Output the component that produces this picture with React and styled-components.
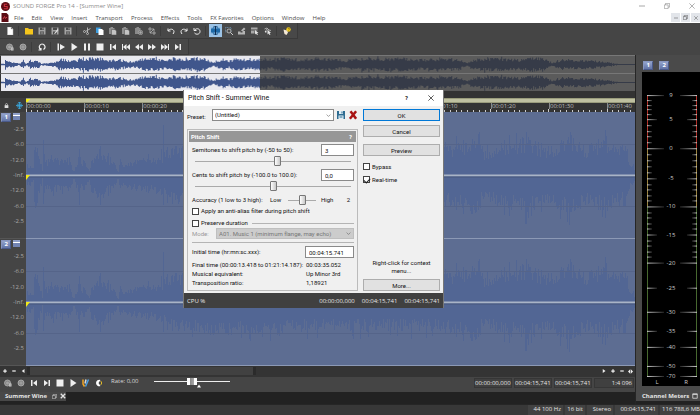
import { useState } from "react";
import styled, { createGlobalStyle } from "styled-components";

const GlobalStyle = createGlobalStyle`
  * { box-sizing: border-box; }
  body {
    margin: 0;
    background: #454545;
    font-family: "Open Sans", "Noto Sans", sans-serif;
    font-size: 6px;
    line-height: 8px;
    color: #e4e4e4;
  }
  button, input, select {
    font: inherit;
    color: inherit;
    margin: 0;
    padding: 0;
  }
`;

/* ---------- waveform data ---------- */

const random = (seed) => {
  let s = seed;
  return () => {
    s = (s * 16807) % 2147483647;
    return s / 2147483647;
  };
};

const level = (points, x) => {
  for (let i = 1; i < points.length; i++) {
    const [x0, y0] = points[i - 1];
    const [x1, y1] = points[i];
    if (x <= x1) return y0 + ((y1 - y0) * (x - x0)) / (x1 - x0 || 1);
  }
  return points[points.length - 1][1];
};

const wavePath = (points, width, mid, seed, rough) => {
  const next = random(seed);
  let d = "";
  for (let x = 0; x < width; x++) {
    const base = level(points, x);
    const peak = next() > 0.86 ? 1.25 : 1;
    const up = Math.max(0.4, base * (1 - rough + rough * next()) * peak);
    const down = Math.max(0.4, base * (1 - rough + rough * next()) * peak);
    d += `M${x} ${(mid - up).toFixed(1)}h1V${(mid + down).toFixed(1)}h-1z`;
  }
  return d;
};

const overviewLevels = [
  [0, 1], [3, 1], [4, 7], [6, 4], [10, 3], [18, 1], [22, 4], [25, 1], [28, 4], [37, 4], [40, 1], [48, 2],
  [55, 3], [58, 7], [66, 5], [76, 5], [84, 8], [100, 7], [108, 5], [116, 7], [124, 4], [132, 3], [142, 7],
  [156, 7], [164, 5], [172, 8], [184, 6], [194, 8], [206, 6], [212, 2], [216, 4], [222, 7], [228, 4],
  [234, 8], [246, 6], [258, 7], [272, 5], [280, 8], [300, 6], [316, 8], [340, 6], [344, 3], [350, 7],
  [380, 7], [400, 8], [420, 6], [445, 7], [458, 6], [466, 2], [475, 6], [490, 8], [505, 7], [520, 6],
  [532, 8], [544, 7], [551, 2], [560, 5], [575, 5], [590, 5], [600, 4], [606, 3], [614, 1], [635, 0],
];

const trackLevels = [
  [0, 3], [1, 12], [6, 8], [7, 8], [8, 34], [11, 40], [12, 18], [15, 12], [16, 4], [17, 30], [19, 16],
  [28, 18], [34, 16], [44, 18], [47, 5], [51, 12], [53, 32], [55, 16], [60, 14], [63, 5], [65, 18],
  [74, 28], [80, 20], [88, 14], [92, 4], [94, 18], [96, 12], [110, 17], [130, 19], [136, 22], [137, 50],
  [138, 24], [146, 30], [200, 34], [300, 30], [400, 30], [418, 30], [440, 34], [452, 44], [456, 26],
  [480, 34], [500, 40], [520, 28], [545, 42], [560, 30], [580, 40], [592, 28], [600, 34], [604, 12], [609, 8],
];

const overviewWaves = [wavePath(overviewLevels, 635, 9, 11, 0.5), wavePath(overviewLevels, 635, 9, 11, 0.5)];
const trackWaves = [wavePath(trackLevels, 609, 63, 71, 0.45), wavePath(trackLevels, 609, 63, 71, 0.45)];

const VIEW_SECONDS = 104.8;
const SELECTED = "40.8%";
const seconds = Array.from({ length: 105 }, (_, i) => i);
const marks = seconds.filter((s) => s % 10 === 0);
const markLabel = (s) => `00:0${Math.floor(s / 60)}:${String(s % 60).padStart(2, "0")}`;

const dbLabels = ["-2.5", "-6.0", "-12.0", "-Inf.", "-12.0", "-6.0", "-2.5"];

const meterMarks = [
  ["9", 23], ["5", 47], ["0", 76], ["-5", 106], ["-10", 134], ["-15", 162], ["-20", 190],
  ["-25", 215], ["-30", 239], ["-35", 258], ["-40", 274], ["-50", 293], ["-70", 303],
];

/* ---------- icons, 16 unit grid ---------- */

const stroke = { fill: "none", stroke: "currentColor", strokeWidth: 2 };

const shapes = {
  newFile: <path d="M3 0h7l4 4v12H3z M10 0v4h4" fill="#fff" stroke="#bbb" />,
  folder: <path d="M0 2h6l2 2h8v11H0z" fill="#f4c51c" />,
  save: (
    <g fill="#a4a4a4">
      <path d="M1 1h14v14H1z" />
      <path d="M4 1h8v5H4zM4 9h8v6H4z" fill="#4b4b4b" />
      <path d="M5 11h6v1H5zM5 13h6v1H5zM9 2h2v3H9z" />
    </g>
  ),
  saveAs: (
    <g fill="#a4a4a4">
      <path d="M1 1h14v14H1z" />
      <path d="M4 1h8v5H4zM4 9h8v6H4z" fill="#4b4b4b" />
      <path d="M7 12l6-8 2 2-6 7-3 1z" fill="#ddd" />
    </g>
  ),
  cut: (
    <g {...stroke} stroke="#b4b4b4">
      <path d="M15 3L5 9M9 1l0 11" />
      <circle cx="3" cy="9" r="2" />
      <circle cx="9" cy="13" r="2" />
    </g>
  ),
  copy: (
    <g>
      <path d="M0 1h9v11H0z" fill="#3d9ee0" />
      <path d="M5 4h7l3 3v9H5z" fill="#fff" />
    </g>
  ),
  paste: (
    <g>
      <path d="M0 2h3V0h5v2h3v12H0z" fill="#909090" />
      <path d="M5 5h7l3 3v8H5z" fill="#c4c4c4" stroke="#4b4b4b" />
    </g>
  ),
  pasteMix: (
    <g>
      <path d="M0 2h3V0h5v2h3v12H0z" fill="#8a8a8a" />
      <circle cx="11" cy="11" r="4.500" fill="#777" stroke="#bbb" />
      <path d="M8 11h6M11 8v6" stroke="#bbb" />
    </g>
  ),
  crop: <path d="M4 0v12h12M0 4h12v12M4 12L12 4" {...stroke} stroke="#b4b4b4" strokeWidth="1.600" />,
  undo: <path d="M2 3v5h5M2 8c3-5 11-5 12 1 0 2-1 4-2 5" {...stroke} />,
  redo: <path d="M14 3v5H9M14 8C11 3 3 3 2 9c0 2 1 4 2 5" {...stroke} />,
  repeat: <path d="M2 2v5h5M3 7c2-5 11-5 11 2 0 6-8 7-11 3" {...stroke} />,
  edit: (
    <g>
      <path d="M0 5h16v6H0z" fill="#1f6aa8" />
      <path d="M2 3v10M5 1v14M11 1v14M14 3v10" stroke="#1f6aa8" strokeWidth="2" />
      <path d="M8 0v16M5 0h6M5 16h6" stroke="#0c2f55" strokeWidth="2" />
    </g>
  ),
  magnify: (
    <g>
      <path d="M1 1h11v9H1z" fill="none" stroke="#7fb2dd" strokeDasharray="2 1" />
      <circle cx="8" cy="8" r="4" fill="#4b4b4b" stroke="#ccc" strokeWidth="1.500" />
      <path d="M11 11l5 5" stroke="#ccc" strokeWidth="2" />
    </g>
  ),
  pencil: <path d="M0 15h14V8H9v3H5v-2H0z M6 7l6-6 3 3-6 5z" fill="#b4b4b4" />,
  event: (
    <g fill="#a8a8a8">
      <path d="M0 1h13v3H0zM0 5h13v2H0zM0 8h7v5H0z" />
      <path d="M8 6v9l2-2 2 3 2-1-2-3h3z" fill="#e4e4e4" />
    </g>
  ),
  envelope: (
    <g>
      <path d="M1 4l5-2 4 4 4 1M2 10l4-6" {...stroke} stroke="#aaa" />
      <path d="M7 5v10l2-2 2 3 2-1-2-3h3zM2 8h3v3H2z" fill="#e4e4e4" />
    </g>
  ),
  help: (
    <g>
      <circle cx="11" cy="5" r="4.500" fill="#f2cc1e" />
      <path d="M10 4c0-2 3-2 3 0 0 1-2 1-2 3" fill="none" stroke="#5a4700" />
      <path d="M1 5l7 2 2 4-3 5-4-2-1-4z" fill="#f5e9d6" />
    </g>
  ),
  armed: (
    <g>
      <circle cx="7" cy="8" r="6" fill="#858585" stroke="#b6b6b6" strokeWidth="1.500" />
      <circle cx="7" cy="8" r="3" fill="#a4a4a4" />
      <path d="M10 9h5v6h-5z" fill="#cfcfcf" />
      <path d="M11 12h3" stroke="#555" />
    </g>
  ),
  record: (
    <g>
      <circle cx="8" cy="8" r="6" fill="#888" stroke="#b6b6b6" strokeWidth="1.500" />
      <circle cx="8" cy="8" r="3" fill="#9c9c9c" />
    </g>
  ),
  loop: <path d="M1 14h5v-4M6 13C0 10 3 2 8 2s9 7 3 11" {...stroke} strokeWidth="2.400" />,
  playAll: <path d="M1 1h3v14H1zM6 2l10 6-10 6z" fill="currentColor" />,
  play: <path d="M3 0l12 8-12 8z" fill="currentColor" />,
  pause: <path d="M2 1h4v14H2zM10 1h4v14h-4z" fill="currentColor" />,
  stop: <path d="M1 1h14v14H1z" fill="currentColor" />,
  toStart: <path d="M2 2h3v12H2zM14 2v12L6 8z" fill="currentColor" />,
  toEnd: <path d="M11 2h3v12h-3zM2 2v12l8-6z" fill="currentColor" />,
  prev: <path d="M0 2h2v12H0zM9 2v12L2 8zM16 2v12L9 8z" fill="currentColor" />,
  rewind: <path d="M8 2v12L0 8zM16 2v12L8 8z" fill="currentColor" />,
  forward: <path d="M0 2v12l8-6zM8 2v12l8-6z" fill="currentColor" />,
  next: <path d="M14 2h2v12h-2zM0 2v12l7-6zM7 2v12l7-6z" fill="currentColor" />,
  plugIn: (
    <g strokeWidth="3">
      <path d="M2 1v9l3 5" stroke="#f0a526" fill="none" />
      <path d="M13 1L7 15" stroke="#4aa0e6" />
      <path d="M8 1L6 9" stroke="#d8d8d8" />
    </g>
  ),
  scrub: (
    <g>
      <path d="M11 2a6.500 6.500 0 100 12l-4-6z" fill="#fff" />
      <path d="M11 4c3 2 3 6 0 8" stroke="#e0b92a" strokeWidth="2" fill="none" />
    </g>
  ),
  lock: (
    <g>
      <path d="M2 7h12v9H2z" fill="#ddd" />
      <path d="M5 8V4c0-3 6-3 6 0v4" fill="none" stroke="#ddd" strokeWidth="2" />
    </g>
  ),
  snap: (
    <g stroke="#39a3d8" strokeWidth="2" fill="none">
      <path d="M8 0v16M0 8h16M2 5h12M5 1h6M5 15h6M2 11h12" />
    </g>
  ),
  minimize: <path d="M0 8h16" stroke="currentColor" strokeWidth="2" />,
  restore: <path d="M1 5h10v10H1zM4 5V1h11v10h-4" fill="none" stroke="currentColor" strokeWidth="1.600" />,
  close: <path d="M1 1l14 14M15 1L1 15" stroke="currentColor" strokeWidth="1.800" />,
  closeBold: <path d="M2 2l12 12M14 2L2 14" stroke="currentColor" strokeWidth="3.500" />,
  maximize: <path d="M2 2h12v12H2zM2 4h12" fill="none" stroke="currentColor" strokeWidth="2" />,
  chevron: <path d="M2 5l6 6 6-6" fill="none" stroke="#666" strokeWidth="2" />,
  plus: <path d="M8 1v14M1 8h14" stroke="currentColor" strokeWidth="5" />,
  minus: <path d="M1 8h14" stroke="currentColor" strokeWidth="5" />,
  left: <path d="M14 0v16L3 8z" fill="currentColor" />,
  right: <path d="M3 0v16l11-8z" fill="currentColor" />,
  both: <path d="M7 1v14L0 8zM9 1v14l7-7z" fill="currentColor" />,
  up: <path d="M8 2l8 12H0z" fill="currentColor" />,
  disk: (
    <g>
      <path d="M0 0h16v16H0z" fill="#2e6c92" />
      <path d="M4 0h8v6H4zM3 9h10v7H3z" fill="#dfeef6" />
      <path d="M9 1h2v4H9zM5 11h6v1H5zM5 13h6v1H5z" fill="#2e6c92" />
    </g>
  ),
  remove: <path d="M4 2l9 12M13 2L3 14" stroke="#a81414" strokeWidth="4" />,
};

const Icon = ({ name, size = 9 }) => (
  <svg width={size} height={size} viewBox="0 0 16 16" aria-hidden="true">
    {shapes[name]}
  </svg>
);

/* ---------- window frame ---------- */

const Page = styled.div`
  position: relative;
  min-height: 100vh;
  display: flex;
  flex-direction: column;
  overflow: hidden;
`;

const TitleBar = styled.header`
  display: flex;
  align-items: center;
  gap: 3px;
  height: 12px;
  padding: 0 5px 0 1px;
  background: #fff;
  color: #8c8c8c;
`;

const Title = styled.h1`
  flex: 1;
  margin: 0;
  font-size: 6px;
  font-weight: 400;
`;

const WindowButtons = styled.div`
  display: flex;
  gap: 19px;
`;

const PlainButton = styled.button`
  display: flex;
  align-items: center;
  justify-content: center;
  border: 0;
  background: none;
`;

const MenuBar = styled.nav`
  display: flex;
  align-items: center;
  gap: 8px;
  height: 11px;
  padding-left: 1px;
  background: #fff;
  color: #4c4c4c;
`;

const MenuIcon = styled.svg`
  margin-right: -3px;
`;

const ChildButtons = styled.div`
  display: flex;
  gap: 1px;
  margin-left: auto;
`;

const ChildButton = styled(PlainButton)`
  width: 9px;
  height: 9px;
  background: #e2e5ea;
`;

const Toolbar = styled.div`
  display: flex;
  align-items: center;
  align-self: flex-start;
  height: 16px;
  padding: 0 4px 0 3px;
  border: 1px solid #3a3a3a;
  border-width: 0 1px 1px 0;
  background: #484848;
`;

const ToolButton = styled(PlainButton)`
  width: 13px;
  height: 13px;
  color: #efefef;
  background: ${(p) => (p.$active ? "#9cc3e6" : "none")};
`;

const Separator = styled.span`
  width: 1px;
  height: 10px;
  margin: 0 3px 0 2px;
  background: #3c3c3c;
`;

const Workspace = styled.div`
  flex: 1;
  display: flex;
  min-height: 0;
`;

const Editor = styled.main`
  flex: 1;
  min-width: 0;
  display: flex;
  flex-direction: column;
  border-right: 1px solid #262626;
`;

const Lane = styled.div`
  height: 18px;
  border-top: 1px solid #777;
  border-left: 1px solid #333;
  background: linear-gradient(to right, #e9e9ef ${SELECTED}, #5b5b5b ${SELECTED});
`;

const Wave = styled.svg`
  display: block;
  width: 100%;
  height: 100%;
`;

const TimeArea = styled.div`
  display: flex;
  height: 21px;
  padding-top: 7px;
  background: #333;
`;

const TimeTools = styled.div`
  display: flex;
  align-items: center;
  justify-content: space-around;
  width: 26px;
  background: #3c3c3c;
`;

const Timeline = styled.div`
  flex: 1;
  min-width: 0;
  overflow: hidden;
`;

const LoopBar = styled.div`
  height: 5px;
  border: 1px solid #9a9c7c;
  border-width: 1px 0;
  background: linear-gradient(135deg, #f5ec1c 3px, #bfc0a0 3px);
`;

const Marks = styled.div`
  display: flex;
  height: 6px;
`;

const Mark = styled.span`
  flex: none;
  border-left: 1px solid #888;
  color: #bbb;
  line-height: 7px;
`;

const Ticks = styled.svg`
  display: block;
  width: 100%;
  height: 3px;
`;

const Tracks = styled.div`
  flex: 1;
  display: flex;
  flex-direction: column;
`;

const Track = styled.section`
  flex: 1;
  display: flex;
  min-height: 126px;
`;

const TrackHead = styled.div`
  display: flex;
  align-items: flex-start;
  width: 26px;
  border-bottom: 1px solid #555;
`;

const Badge = styled.span`
  width: 10px;
  height: 9px;
  padding-right: 2px;
  border: 1px solid #8796bf;
  border-right-color: #4a5a8a;
  border-bottom-color: #4a5a8a;
  background: linear-gradient(#93a3cb, #6274a6);
  color: #fff;
  font-weight: 700;
  line-height: 7px;
  text-align: right;
`;

const ChannelBox = styled.div`
  display: flex;
  gap: 2px;
  width: 20px;
  margin: 1px -20px 0 1px;
`;

const Collapse = styled.button`
  width: 7px;
  height: 7px;
  border: 0;
  border-top: 2px solid #8f9fc8;
  background: linear-gradient(#fff 1px, #7385b4 1px);
`;

const DbScale = styled.ol`
  flex: 1;
  align-self: stretch;
  display: flex;
  flex-direction: column;
  margin: 0;
  padding: 9px 2px 9px 0;
  list-style: none;
  color: #a8a8a8;
  text-align: right;
`;

const DbLabel = styled.li`
  flex: 1;
  display: flex;
  align-items: center;
  justify-content: flex-end;
`;

const WaveBox = styled.div`
  flex: 1;
  min-width: 0;
  border-bottom: 1px solid #8c99b5;
  background: #5d6d92;
`;

const ScrollRow = styled.div`
  display: flex;
  align-items: center;
  height: 11px;
  padding-bottom: 1px;
  background: #343434;
`;

const ScrollTrack = styled.div`
  flex: 1;
`;

const ScrollThumb = styled.div`
  width: 40%;
  height: 8px;
  border: 3px solid #2b2b2b;
  border-width: 0 3px;
  background: #414141;
`;

const ScrollButton = styled(PlainButton)`
  width: 9px;
  height: 9px;
  color: #eee;
`;

const Transport = styled.div`
  display: flex;
  align-items: center;
  height: 15px;
  padding: 0 1px 3px;
`;

const Rate = styled.div`
  flex: 1;
  align-self: flex-start;
  display: flex;
  align-items: center;
  gap: 15px;
  padding-left: 6px;
  color: #d8d8d8;
`;

const RateControl = styled.div`
  position: relative;
  display: flex;
`;

const RateSlider = styled.input`
  width: 76px;
  height: 8px;
  appearance: none;
  background: linear-gradient(#eee, #eee) center / 100% 1px no-repeat;

  &::-webkit-slider-thumb {
    appearance: none;
    width: 10px;
    height: 7px;
    background: linear-gradient(90deg, #fff 3px, #888 3px, #aaa 7px, #fff 7px);
  }
`;

const RateMarker = styled.span`
  position: absolute;
  top: 7px;
  left: 43px;
  display: flex;
  color: #fff;
`;

const Readout = styled.output`
  width: ${(p) => p.$width}px;
  height: 10px;
  margin-left: 2px;
  padding-right: 1px;
  border: 1px solid #363636;
  background: #404040;
  line-height: 8px;
  text-align: right;
  white-space: nowrap;
`;

const TabRow = styled.div`
  height: 12px;
  background: #222;
`;

const Tab = styled.div`
  display: flex;
  align-items: center;
  gap: 3px;
  width: 66px;
  height: 9px;
  padding: 0 0 1px 5px;
  background: #484848;
  font-weight: 700;
`;

const TabTitle = styled.span`
  flex: 1;
  white-space: nowrap;
`;

/* ---------- meters ---------- */

const Meters = styled.aside`
  display: flex;
  flex-direction: column;
  width: 64px;
  padding: 6px 0 0 6px;
  border-bottom: 3px solid #222;
  background: #4a4a4a;
`;

const MeterBadges = styled.div`
  display: flex;
  gap: 6px;
  height: 11px;
  padding-left: 1px;
`;

const MeterChart = styled.svg`
  flex: 1;
  width: 100%;
  background: #000;
`;

const MeterTitle = styled.div`
  display: flex;
  align-items: center;
  gap: 3px;
  height: 15px;
  padding-top: 4px;
  font-weight: 700;
  white-space: nowrap;
`;

const StatusBar = styled.footer`
  display: flex;
  justify-content: flex-end;
  gap: 2px;
  height: 12px;
  background: #383838;
  border-top: 1px solid #262626;
`;

const StatusCell = styled.span`
  width: ${(p) => p.$width}px;
  padding-right: ${(p) => (p.$last ? 0 : 2)}px;
  background: #424242;
  line-height: 9px;
  text-align: right;
  white-space: nowrap;
`;

/* ---------- dialog ---------- */

const Dialog = styled.section`
  position: absolute;
  left: 183px;
  top: 90px;
  width: 261px;
  border: 1px solid #777;
  border-width: 0 1px;
  background: #f0f0f0;
  color: #111;
  font-family: Roboto, "Open Sans", sans-serif;
`;

const DialogTitle = styled.header`
  display: flex;
  align-items: center;
  gap: 20px;
  height: 16px;
  padding: 0 9px 0 4px;
  background: #fff;
`;

const DialogName = styled.h2`
  flex: 1;
  margin: 0;
  font-size: 7px;
  font-weight: 400;
`;

const DialogBody = styled.div`
  display: flex;
  gap: 5px;
  padding: 3px 3px 2px;
`;

const Settings = styled.div`
  width: 171px;
`;

const Actions = styled.div`
  flex: 1;
  display: flex;
  flex-direction: column;
`;

const ActionButton = styled.button`
  height: 12px;
  margin-bottom: ${(p) => p.$after || 0}px;
  border: 1px solid ${(p) => (p.$primary ? "#0078d7" : "#adadad")};
  background: #e1e1e1;
  line-height: 9px;
`;

const Hint = styled.p`
  margin: auto 0 4px;
  padding: 0 6px;
  text-align: center;
`;

const PresetRow = styled.div`
  display: flex;
  align-items: center;
  height: 12px;
  margin-bottom: 8px;
  gap: 3px;
`;

const PresetLabel = styled.label`
  width: 22px;
  padding-top: 3px;
`;

const SelectBox = styled.div`
  flex: 1;
  display: flex;
  align-items: center;
  height: ${(p) => (p.$disabled ? 11 : 12)}px;
  padding: 0 2px;
  border: 1px solid ${(p) => (p.$disabled ? "#bfbfbf" : "#8a8a8a")};
  background: ${(p) => (p.$disabled ? "#ccc" : "#fff")};
  color: ${(p) => (p.$disabled ? "#777" : "#111")};
`;

const Select = styled.select`
  flex: 1;
  min-width: 0;
  border: 0;
  appearance: none;
  background: none;

  &:disabled {
    opacity: 1;
    color: #777;
  }
`;

const Panel = styled.div`
  padding: 1px;
  border: 1px solid #bbb;
`;

const PanelHead = styled.div`
  display: flex;
  justify-content: space-between;
  height: 11px;
  padding: 1px 4px 0 2px;
  background: #979797;
  color: #fff;
  font-weight: 700;
  line-height: 10px;
`;

const PanelBody = styled.div`
  display: flex;
  flex-direction: column;
  padding: 2px 2px 2px 3px;
`;

const Row = styled.div`
  display: flex;
  align-items: center;
  justify-content: space-between;
  height: 12px;
`;

const AccuracyRow = styled.div`
  display: grid;
  grid-template-columns: 78px 18px 33px 1fr auto;
  align-items: center;
  height: 12px;
  padding-right: 4px;
`;

const Field = styled.input`
  width: ${(p) => p.$width}px;
  height: 12px;
  padding-left: 3px;
  border: 1px solid #8a8a8a;
  background: #fff;
`;

const Slider = styled.input`
  width: ${(p) => p.$width}px;
  height: 10px;
  margin: ${(p) => (p.$wide ? "0 0 3px 3px" : 0)};
  appearance: none;
  background: linear-gradient(#aaa, #aaa) center / 100% 1px no-repeat;

  &::-webkit-slider-thumb {
    appearance: none;
    width: 7px;
    height: 10px;
    border: 1px solid #777;
    border-radius: 1px;
    background: linear-gradient(90deg, #fff, #c8c8c8);
  }
`;

const Check = styled.label`
  display: flex;
  align-items: center;
  gap: 2px;
  height: ${(p) => p.$height || 10}px;
  white-space: nowrap;

  input {
    flex: none;
    display: grid;
    place-items: center;
    width: 7px;
    height: 7px;
    border: 1px solid #444;
    appearance: none;
    background: #fff;
  }

  input:checked::before {
    content: "";
    width: 3px;
    height: 5px;
    border: 1px solid #222;
    border-width: 0 1px 1px 0;
    transform: rotate(45deg);
  }
`;

const Rule = styled.hr`
  flex: ${(p) => (p.$fill ? 1 : "none")};
  height: 1px;
  margin: ${(p) => (p.$fill ? "0 0 0 4px" : "3px 0")};
  border: 0;
  background: #b4b4b4;
`;

const CheckRow = styled.div`
  display: flex;
  align-items: center;
  margin-top: 2px;
`;

const ModeRow = styled.div`
  display: flex;
  align-items: center;
  color: #999;
`;

const ModeLabel = styled.label`
  width: 24px;
`;

const Facts = styled.dl`
  display: grid;
  grid-template-columns: 114px 1fr;
  margin: 2px 0 0;
  line-height: 9px;
  white-space: nowrap;
`;

const Fact = styled.dd`
  margin: 0;
`;

const DialogFooter = styled.footer`
  display: flex;
  align-items: center;
  gap: 7px;
  height: 15px;
  padding: 0 3px;
  background: #404040;
  color: #e8e8e8;
  font-family: "Open Sans", "Noto Sans", sans-serif;
`;

const Grow = styled.span`
  flex: 1;
`;

/* ---------- parts ---------- */

const menus = [
  "File", "Edit", "View", "Insert", "Transport", "Process", "Effects",
  "Tools", "FX Favorites", "Options", "Window", "Help",
];

const fileTools = [
  "newFile", "|", "folder", "save", "saveAs", "save", "|", "cut", "copy", "paste", "paste", "pasteMix", "crop",
  "|", "undo", "redo", "repeat", "|", "edit", "magnify", "pencil", "event", "envelope", "|", "help",
];

const playTools = [
  "armed", "record", "|", "loop", "|", "playAll", "play", "pause", "stop", "toStart", "prev", "rewind",
  "forward", "next", "toEnd",
];

const ToolStrip = ({ items, active }) => (
  <Toolbar>
    {items.map((item, i) =>
      item === "|" ? (
        <Separator key={i} />
      ) : (
        <ToolButton key={i} aria-label={item} $active={item === active}>
          <Icon name={item} size={item === active ? 9 : 8} />
        </ToolButton>
      )
    )}
  </Toolbar>
);

const Overview = () => (
  <>
    {overviewWaves.map((d, i) => (
      <Lane key={i}>
        <Wave viewBox="0 0 635 18" preserveAspectRatio="none">
          <defs>
            <linearGradient id={`lane${i}`} gradientUnits="userSpaceOnUse" x1="0" x2="635">
              <stop offset={SELECTED} stopColor="#40568c" />
              <stop offset={SELECTED} stopColor="#363b48" />
            </linearGradient>
          </defs>
          <path d="M0 8.500h635v1H0z" fill={`url(#lane${i})`} />
          <path d={d} fill={`url(#lane${i})`} />
        </Wave>
      </Lane>
    ))}
  </>
);

const Ruler = () => (
  <TimeArea>
    <TimeTools>
      <Icon name="lock" size={5} />
      <Icon name="snap" size={7} />
    </TimeTools>
    <Timeline>
      <LoopBar />
      <Marks>
        {marks.map((s) => (
          <Mark key={s} style={{ width: `${1000 / VIEW_SECONDS}%` }}>
            {markLabel(s)}
          </Mark>
        ))}
      </Marks>
      <Ticks shapeRendering="crispEdges">
        {seconds.map((s) => {
          const x = `${(s / VIEW_SECONDS) * 100}%`;
          return <line key={s} x1={x} x2={x} y1={s % 10 ? 1 : 0} y2="3" stroke="#ccc" />;
        })}
      </Ticks>
    </Timeline>
  </TimeArea>
);

const TrackView = ({ number, wave }) => (
  <Track>
    <TrackHead>
      <ChannelBox>
        <Badge>{number}</Badge>
        <Collapse aria-label={`Channel ${number}`} />
      </ChannelBox>
      <DbScale>
        {dbLabels.map((label, i) => (
          <DbLabel key={i}>{label}</DbLabel>
        ))}
      </DbScale>
    </TrackHead>
    <WaveBox>
      <Wave viewBox="0 0 609 126" preserveAspectRatio="none">
        <path d={wave} fill="#526694" shapeRendering="crispEdges" />
        <path d="M0 32.500h609M0 94.500h609" stroke="#556489" />
        <path d="M0 63.500h609" stroke="#a9b4c6" strokeWidth="2" />
        <path d="M0 65h609" stroke="#46577c" />
        <path d="M0 63h4l-4 5z" fill="#f4ea18" />
      </Wave>
    </WaveBox>
  </Track>
);

const meterColor = (y) => (y < 76 ? "#b03028" : y < 134 ? "#9a8340" : "#47682f");

const MeterScale = () => {
  const minor = [];
  meterMarks.slice(1).forEach(([label, y], i) => {
    const from = meterMarks[i][1];
    const count = y < 200 ? 5 : 1;
    for (let n = 1; n < count; n++) minor.push(from + ((y - from) * n) / count);
  });
  return (
    <MeterChart viewBox="0 0 58 313" preserveAspectRatio="none">
      <defs>
        <linearGradient id="fadeRight">
          <stop offset="0" stopColor="#ccc" />
          <stop offset="1" stopColor="#ccc" stopOpacity="0.200" />
        </linearGradient>
        <linearGradient id="fadeLeft">
          <stop offset="0" stopColor="#ccc" stopOpacity="0.200" />
          <stop offset="1" stopColor="#ccc" />
        </linearGradient>
      </defs>
      {[[23, 76], [76, 134], [134, 303]].map(([a, b]) => (
        <path key={a} d={`M5.500 ${a}V${b}M54.500 ${a}V${b}`} stroke={meterColor(a)} />
      ))}
      {minor.map((y) => (
        <g key={y}>
          <rect x="5" y={Math.round(y)} width="5" height="1" fill="url(#fadeRight)" />
          <rect x="50" y={Math.round(y)} width="5" height="1" fill="url(#fadeLeft)" />
        </g>
      ))}
      {meterMarks.map(([label, y], i) => {
        const w = i % 2 && y < 260 ? 10 : 17;
        return (
          <g key={label}>
            <rect x="5" y={y} width={w} height="1" fill="url(#fadeRight)" />
            <rect x={55 - w} y={y} width={w} height="1" fill="url(#fadeLeft)" />
            <text x="29" y={y + 2} fill="#ccc" fontSize="6" textAnchor="middle">{label}</text>
          </g>
        );
      })}
      <text x="15" y="311" fill="#ccc" fontSize="6" textAnchor="middle">L</text>
      <text x="44" y="311" fill="#ccc" fontSize="6" textAnchor="middle">R</text>
    </MeterChart>
  );
};

const PitchShift = () => {
  const [semitones, setSemitones] = useState(3);
  const [cents, setCents] = useState(0);
  const [accuracy, setAccuracy] = useState(2);

  return (
    <Dialog role="dialog" aria-labelledby="dialog-name">
      <DialogTitle>
        <DialogName id="dialog-name">Pitch Shift - Summer Wine</DialogName>
        <PlainButton><b>?</b></PlainButton>
        <PlainButton aria-label="Close"><Icon name="close" size={6} /></PlainButton>
      </DialogTitle>
      <DialogBody>
        <Settings>
          <PresetRow>
            <PresetLabel htmlFor="preset">Preset:</PresetLabel>
            <SelectBox>
              <Select id="preset"><option>(Untitled)</option></Select>
              <Icon name="chevron" size={5} />
            </SelectBox>
            <PlainButton aria-label="Save preset"><Icon name="disk" size={8} /></PlainButton>
            <PlainButton aria-label="Delete preset"><Icon name="remove" size={10} /></PlainButton>
          </PresetRow>
          <Panel>
            <PanelHead><span>Pitch Shift</span><span>?</span></PanelHead>
            <PanelBody>
              <Row>
                <label htmlFor="semitones">Semitones to shift pitch by (-50 to 50):</label>
                <Field id="semitones" $width={33} value={semitones} onChange={(e) => setSemitones(e.target.value)} />
              </Row>
              <Slider
                type="range" aria-label="Semitones" $width={156} $wide min="-50" max="50"
                value={semitones} onChange={(e) => setSemitones(e.target.value)}
              />
              <Row>
                <label htmlFor="cents">Cents to shift pitch by (-100.0 to 100.0):</label>
                <Field
                  id="cents" $width={33} value={Number(cents).toFixed(1).replace(".", ",")}
                  onChange={(e) => setCents(parseFloat(e.target.value.replace(",", ".")) || 0)}
                />
              </Row>
              <Slider
                type="range" aria-label="Cents" $width={156} $wide min="-100" max="100"
                value={cents} onChange={(e) => setCents(e.target.value)}
              />
              <AccuracyRow>
                <label htmlFor="accuracy">Accuracy (1 low to 3 high):</label>
                <span>Low</span>
                <Slider
                  id="accuracy" type="range" $width={28} min="1" max="3"
                  value={accuracy} onChange={(e) => setAccuracy(e.target.value)}
                />
                <span>High</span>
                <span>{accuracy}</span>
              </AccuracyRow>
              <Check><input type="checkbox" />Apply an anti-alias filter during pitch shift</Check>
              <CheckRow>
                <Check><input type="checkbox" />Preserve duration</Check>
                <Rule $fill />
              </CheckRow>
              <ModeRow>
                <ModeLabel htmlFor="mode">Mode:</ModeLabel>
                <SelectBox $disabled>
                  <Select id="mode" disabled><option>A01. Music 1 (minimum flange, may echo)</option></Select>
                  <Icon name="chevron" size={5} />
                </SelectBox>
              </ModeRow>
              <Rule />
              <Row>
                <label htmlFor="initial">Initial time (hr:mn:sc.xxx):</label>
                <Field id="initial" $width={49} defaultValue="00:04:15.741" />
              </Row>
              <Facts>
                <dt>Final time (00:00:13.418 to 01:21:14.187):</dt><Fact>00:03:35.052</Fact>
                <dt>Musical equivalent:</dt><Fact>Up Minor 3rd</Fact>
                <dt>Transposition ratio:</dt><Fact>1,18921</Fact>
              </Facts>
            </PanelBody>
          </Panel>
        </Settings>
        <Actions>
          <ActionButton $primary $after={4}>OK</ActionButton>
          <ActionButton $after={7}>Cancel</ActionButton>
          <ActionButton $after={4}>Preview</ActionButton>
          <Check $height={13}><input type="checkbox" />Bypass</Check>
          <Check $height={13}><input type="checkbox" defaultChecked />Real-time</Check>
          <Hint>Right-click for context menu...</Hint>
          <ActionButton>More...</ActionButton>
        </Actions>
      </DialogBody>
      <DialogFooter>
        <span>CPU %</span>
        <Grow />
        <span>00:00:00,000</span>
        <span>00:04:15,741</span>
        <span>00:04:15,741</span>
      </DialogFooter>
    </Dialog>
  );
};

const App = () => {
  const [rate, setRate] = useState(0);

  return (
    <Page>
      <GlobalStyle />
      <TitleBar>
        <svg width="9" height="9" viewBox="0 0 16 16" aria-hidden="true">
          <circle cx="8" cy="8" r="8" fill="#5c0c14" />
          <path d="M11 4H6v4h5v4H5" fill="none" stroke="#c8303c" strokeWidth="2" />
        </svg>
        <Title>SOUND FORGE Pro 14 - [Summer Wine]</Title>
        <WindowButtons>
          <PlainButton aria-label="Minimize"><Icon name="minimize" size={6} /></PlainButton>
          <PlainButton aria-label="Restore"><Icon name="restore" size={6} /></PlainButton>
          <PlainButton aria-label="Close"><Icon name="close" size={6} /></PlainButton>
        </WindowButtons>
      </TitleBar>
      <MenuBar>
        <MenuIcon width="8" height="9" viewBox="0 0 14 18" aria-hidden="true">
          <path d="M0 0h10l4 4v14H0z" fill="#5c0c14" />
          <path d="M3 12l3-5 2 4 3-3" fill="none" stroke="#c8404a" strokeWidth="2" />
        </MenuIcon>
        {menus.map((menu) => (
          <PlainButton key={menu}>{menu}</PlainButton>
        ))}
        <ChildButtons>
          <ChildButton aria-label="Minimize document"><Icon name="minimize" size={4} /></ChildButton>
          <ChildButton aria-label="Restore document"><Icon name="restore" size={5} /></ChildButton>
          <ChildButton aria-label="Close document"><Icon name="close" size={4} /></ChildButton>
        </ChildButtons>
      </MenuBar>
      <ToolStrip items={fileTools} active="edit" />
      <ToolStrip items={playTools} />
      <Workspace>
        <Editor>
          <Overview />
          <Ruler />
          <Tracks>
            <TrackView number={1} wave={trackWaves[0]} />
            <TrackView number={2} wave={trackWaves[1]} />
          </Tracks>
          <ScrollRow>
            <ScrollButton aria-label="Zoom in level"><Icon name="plus" size={4} /></ScrollButton>
            <ScrollButton aria-label="Zoom out level"><Icon name="minus" size={4} /></ScrollButton>
            <ScrollButton aria-label="Scroll left"><Icon name="left" size={4} /></ScrollButton>
            <ScrollTrack><ScrollThumb /></ScrollTrack>
            <ScrollButton aria-label="Scroll right"><Icon name="right" size={4} /></ScrollButton>
            <ScrollButton aria-label="Zoom in time"><Icon name="plus" size={4} /></ScrollButton>
            <ScrollButton aria-label="Zoom out time"><Icon name="minus" size={4} /></ScrollButton>
            <ScrollButton aria-label="Zoom selection"><Icon name="both" size={5} /></ScrollButton>
          </ScrollRow>
          <Transport>
            {["armed", "record", "toStart", "toEnd", "stop", "play", "plugIn", "scrub"].map((name) => (
              <ToolButton key={name} aria-label={name}><Icon name={name} size={8} /></ToolButton>
            ))}
            <Rate>
              <label htmlFor="rate">Rate: {Number(rate).toFixed(2).replace(".", ",")}</label>
              <RateControl>
                <RateSlider
                  id="rate" type="range" min="-10" max="10"
                  value={rate} onChange={(e) => setRate(e.target.value)}
                />
                <RateMarker><Icon name="up" size={4} /></RateMarker>
              </RateControl>
            </Rate>
            <Readout $width={38}>00:00:00,000</Readout>
            <Readout $width={38}>00:04:15,741</Readout>
            <Readout $width={38}>00:04:15,741</Readout>
            <Readout $width={40}>1:4 096</Readout>
          </Transport>
          <TabRow>
            <Tab>
              <TabTitle>Summer Wine</TabTitle>
              <PlainButton aria-label="Restore tab"><Icon name="restore" size={5} /></PlainButton>
              <PlainButton aria-label="Close tab"><Icon name="closeBold" size={6} /></PlainButton>
            </Tab>
          </TabRow>
        </Editor>
        <Meters>
          <MeterBadges>
            <Badge>1</Badge>
            <Badge>2</Badge>
          </MeterBadges>
          <MeterScale />
          <MeterTitle>
            Channel Meters
            <Icon name="maximize" size={6} />
          </MeterTitle>
        </Meters>
      </Workspace>
      <StatusBar>
        <StatusCell $width={35}>44 100 Hz</StatusCell>
        <StatusCell $width={20}>16 bit</StatusCell>
        <StatusCell $width={26}>Stereo</StatusCell>
        <StatusCell $width={43}>00:04:15,741</StatusCell>
        <StatusCell $width={40} $last>116 788,6 MB</StatusCell>
      </StatusBar>
      <PitchShift />
    </Page>
  );
};

export default App;
